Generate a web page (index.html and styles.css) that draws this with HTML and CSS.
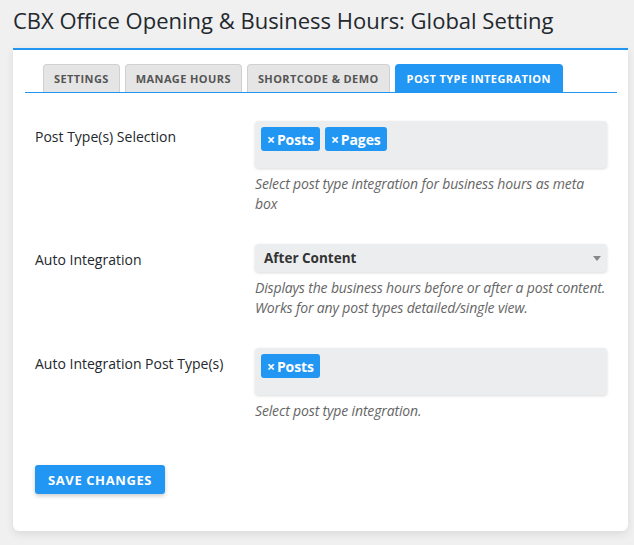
FILE: index.html
```html
<!DOCTYPE html>
<html lang="en">
<head>
<meta charset="utf-8">
<title>CBX Office Opening &amp; Business Hours: Global Setting</title>
<link rel="stylesheet" href="styles.css">
</head>
<body>
<div class="wrap">
  <h1 class="page-title">CBX Office Opening &amp; Business Hours: Global Setting</h1>
  <div class="card">
    <nav class="tabs">
      <a class="tab">Settings</a>
      <a class="tab">Manage Hours</a>
      <a class="tab">Shortcode &amp; Demo</a>
      <a class="tab active">Post Type Integration</a>
    </nav>
    <form class="form">
      <div class="row">
        <div class="label">Post Type(s) Selection</div>
        <div class="field">
          <div class="multi">
            <span class="chip"><span class="x">×</span>Posts</span>
            <span class="chip"><span class="x">×</span>Pages</span>
          </div>
          <p class="desc">Select post type integration for business hours as meta box</p>
        </div>
      </div>
      <div class="row">
        <div class="label">Auto Integration</div>
        <div class="field">
          <div class="select">
            <span>After Content</span>
            <span class="arrow"></span>
          </div>
          <p class="desc">Displays the business hours before or after a post content. Works for any post types detailed/single view.</p>
        </div>
      </div>
      <div class="row">
        <div class="label">Auto Integration Post Type(s)</div>
        <div class="field">
          <div class="multi">
            <span class="chip"><span class="x">×</span>Posts</span>
          </div>
          <p class="desc">Select post type integration.</p>
        </div>
      </div>
      <div class="actions">
        <button type="button" class="btn">Save Changes</button>
      </div>
    </form>
  </div>
</div>
</body>
</html>
```

FILE: styles.css
```css
* { box-sizing: border-box; }
html, body { margin: 0; padding: 0; }
body {
  background: #f0f0f1;
  font-family: "Open Sans", "Noto Sans", sans-serif;
  color: #23282d;
  width: 634px;
  height: 545px;
  overflow: hidden;
}
.wrap {
  padding: 0 6px 0 13px;
}
.page-title {
  margin: 0;
  padding: 5px 0 0 0;
  height: 48px;
  font-size: 22px;
  line-height: 30px;
  font-weight: 400;
  color: #23282d;
}
.card {
  background: #fff;
  border-top: 2px solid #2196f3;
  border-radius: 0 0 6px 6px;
  box-shadow: 0 3px 8px rgba(0,0,0,0.09);
  padding: 14px 11px 37px 12px;
}
.tabs {
  display: flex;
  gap: 5px;
  padding-left: 18px;
  border-bottom: 1px solid #2196f3;
  height: 29px;
}
.tab {
  display: flex;
  align-items: center;
  height: 28px;
  padding: 0 10px;
  background: #e5e5e5;
  border: 1px solid #d0d0d0;
  border-bottom: none;
  border-radius: 4px 4px 0 0;
  color: #555;
  font-size: 11px;
  font-weight: 700;
  text-transform: uppercase;
  letter-spacing: 0.4px;
}
.tab.active {
  background: #2196f3;
  border-color: #2196f3;
  color: #fff;
  padding: 0 11px;
}
.form {
  padding: 13px 10px 0 10px;
}
.row {
  display: flex;
  padding: 15px 0;
}
.label {
  width: 220px;
  flex: none;
  padding-top: 6px;
  font-size: 14px;
  line-height: 20px;
  font-weight: 500;
  color: #23282d;
}
.field {
  width: 352px;
  flex: none;
}
.multi {
  display: flex;
  flex-wrap: wrap;
  align-content: flex-start;
  gap: 5px;
  min-height: 47px;
  padding: 6px;
  background: #ecedee;
  border-radius: 4px;
  box-shadow: 0 1px 3px rgba(0,0,0,0.15);
}
.chip {
  display: inline-flex;
  align-items: center;
  height: 24px;
  padding: 0 6px;
  background: #2196f3;
  color: #fff;
  border-radius: 3px;
  font-size: 14px;
  font-weight: 700;
  letter-spacing: -0.1px;
}
.chip .x {
  margin-right: 2px;
  font-weight: 700;
}
.select {
  display: flex;
  align-items: center;
  justify-content: space-between;
  height: 28px;
  padding: 0 6px 0 9px;
  background: #ecedee;
  border-radius: 4px;
  box-shadow: 0 1px 3px rgba(0,0,0,0.15);
  font-size: 13.5px;
  font-weight: 700;
  color: #333;
}
.arrow {
  width: 0;
  height: 0;
  border-left: 4px solid transparent;
  border-right: 4px solid transparent;
  border-top: 5px solid #888;
}
.desc {
  margin: 6px 0 0 0;
  font-size: 14px;
  line-height: 20px;
  font-style: italic;
  color: #666;
  letter-spacing: -0.15px;
}
.actions {
  padding-top: 29px;
}
.btn {
  display: inline-flex;
  align-items: center;
  height: 29px;
  padding: 0 13px;
  background: #2196f3;
  color: #fff;
  border: none;
  border-radius: 3px;
  box-shadow: 0 2px 4px rgba(0,0,0,0.2);
  font-family: "Open Sans", "Noto Sans", sans-serif;
  font-size: 13px;
  font-weight: 700;
  text-transform: uppercase;
  letter-spacing: 0.6px;
}
```
